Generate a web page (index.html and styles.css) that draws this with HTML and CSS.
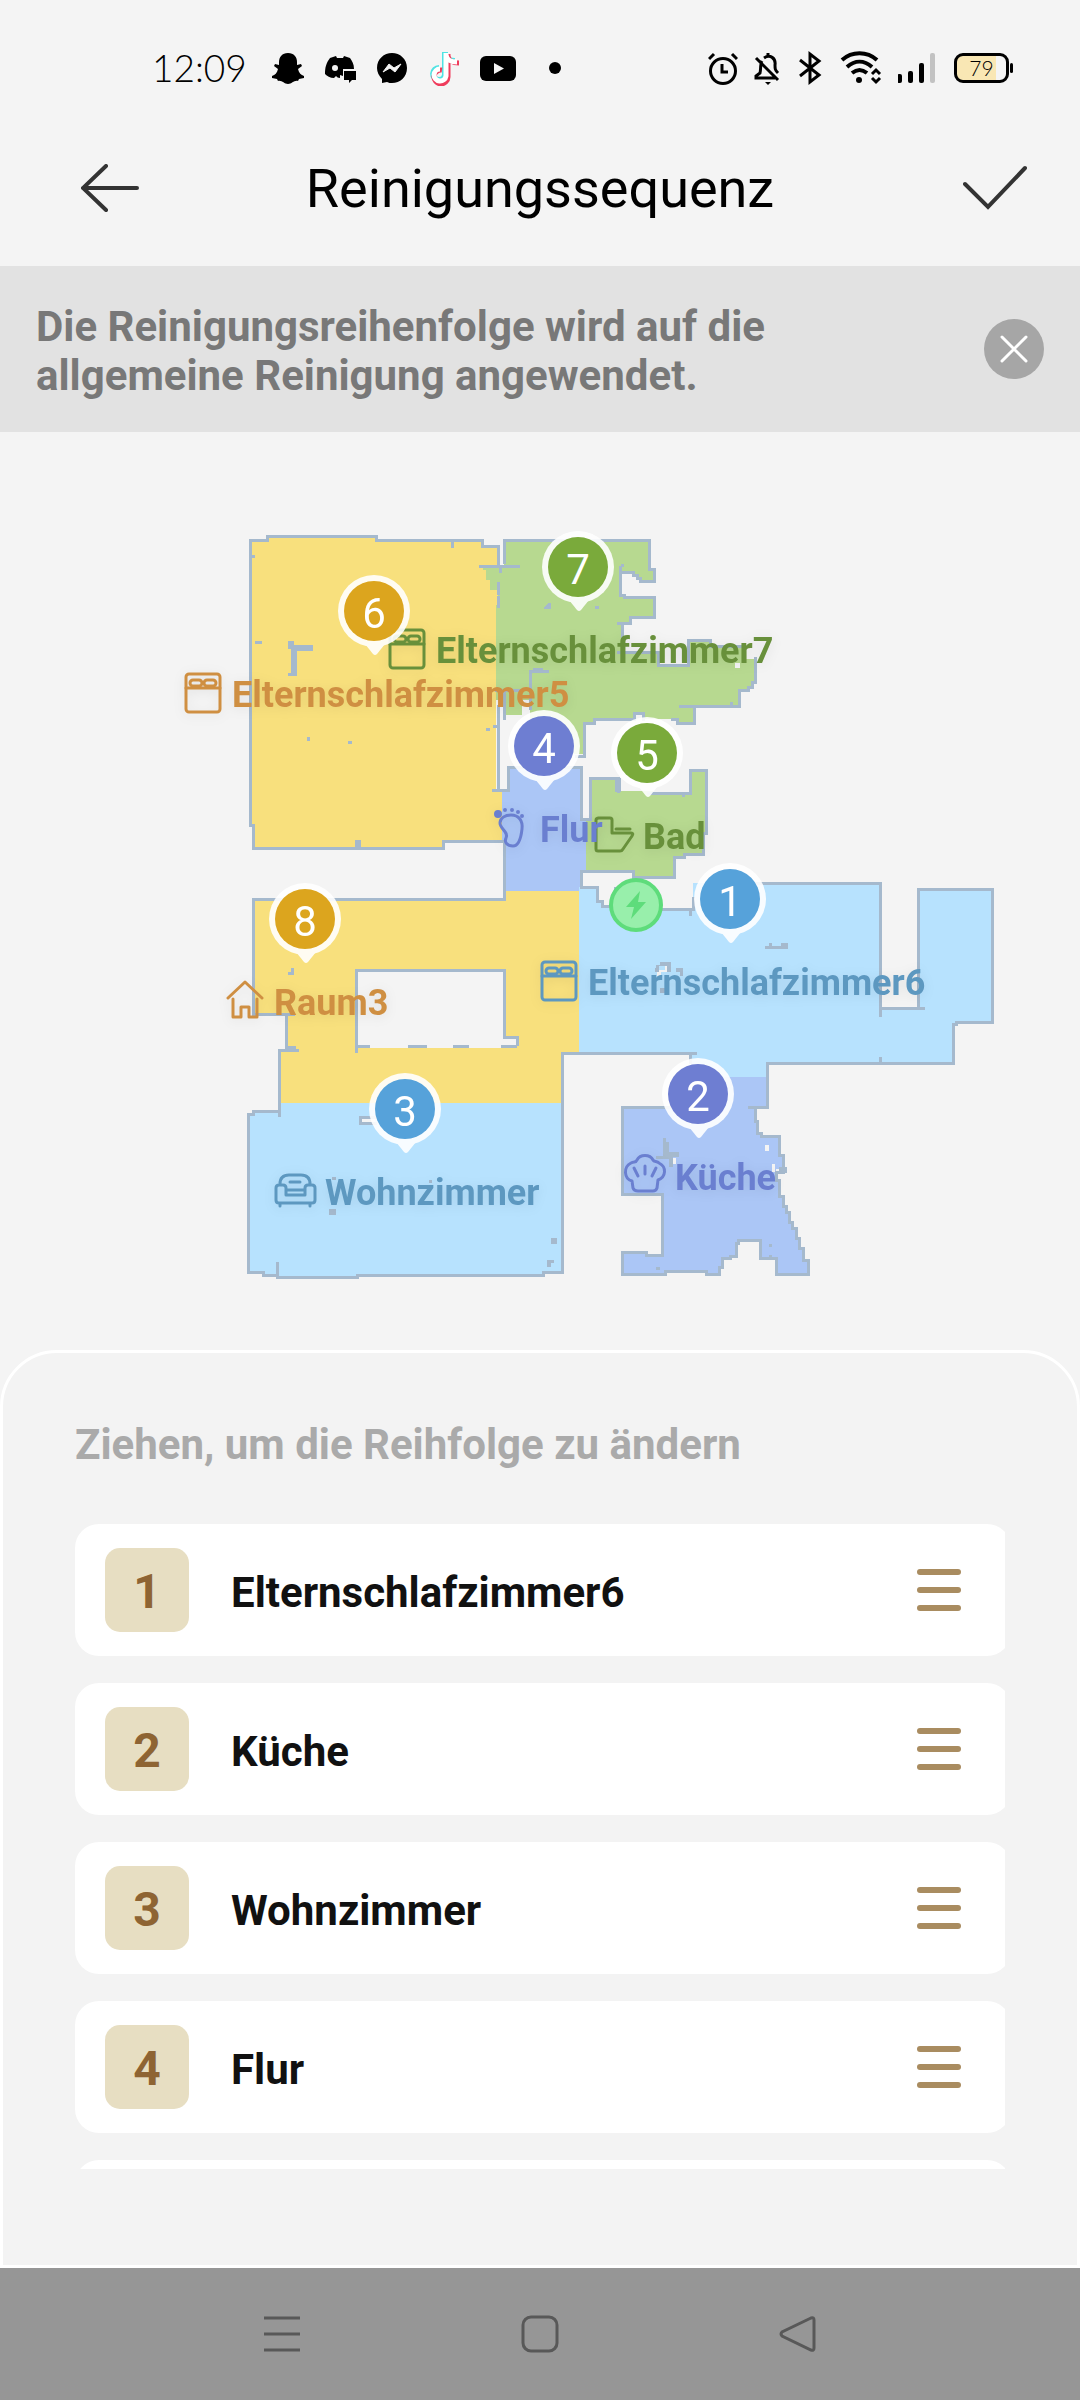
FILE: index.html
```html
<!DOCTYPE html>
<html lang="de">
<head>
    <meta charset="UTF-8">
    <meta name="viewport" content="width=device-width, initial-scale=1.0">
    <title>Reinigungssequenz</title>
    <link rel="stylesheet" href="styles.css">
</head>
<body>

    <div class="status-bar">
        <div class="status-left">
            <span class="clock">12:09</span>
            <!-- Snapchat -->
            <svg width="32" height="36" viewBox="0 0 32 36"><path d="M16 3c6 0 9 4 9 9v3l4-1 1 2-4 3c1 4 3 6 6 7v2l-5 1-1 2c-4-1-6 3-10 3s-6-4-10-3l-1-2-5-1v-2c3-1 5-3 6-7l-4-3 1-2 4 1v-3c0-5 3-9 9-9z"/></svg>
            <!-- Discord -->
            <svg width="32" height="36" viewBox="0 0 32 36"><path d="M6 8l6-2 1 2h6l1-2 6 2c2 3 4 6 4 11H19v7l-3-1v3c-2 0-3-1-4-2l-2 2c-4 0-7-2-9-4 0-6 1-11 5-16z"/><path d="M20 21h12v9h-4l-3 3v-3h-5z"/><circle cx="11" cy="18" r="3" fill="#f4f4f4"/></svg>
            <!-- Messenger -->
            <svg width="32" height="36" viewBox="0 0 32 36"><path d="M16 3C8 3 1 9 1 18c0 4 2 8 5 11v4l5-1c2 1 3 1 5 1 8 0 15-6 15-15S24 3 16 3z"/><path d="M7 22l6-8 5 4 7-4-6 8-5-4z" fill="#f4f4f4" stroke="#f4f4f4"/></svg>
            <!-- TikTok -->
            <svg width="32" height="36" viewBox="0 0 32 36" fill="none" stroke-width="5"><path d="M17 2v23a6 6 0 1 1-6-7M17 4c1 5 4 7 10 7" stroke="#4fe3e3" stroke-width="6"/><path d="M20 4v23a7 7 0 1 1-6-7M20 6c1 5 4 7 11 7" stroke="#ef3c5c"/><path d="M18 3v23a6 6 0 1 1-6-7M18 5c1 5 4 7 11 7" stroke="#fff"/></svg>
            <!-- YouTube -->
            <svg width="36" height="36" viewBox="0 0 36 36"><rect y="6" width="36" height="25" rx="6"/><path d="M14 13l10 5.500-10 5.500z" fill="#f4f4f4"/></svg>
            <svg class="more-dot" width="14" height="36" viewBox="0 0 14 36"><circle cx="7" cy="18" r="6"/></svg>
        </div>
        <div class="status-right">
            <!-- Wecker -->
            <svg width="30" height="36" viewBox="0 0 30 36" fill="none" stroke="#000" stroke-width="3"><circle cx="15" cy="21" r="12.500"/><path d="M14 14v8h6M1 9l5-5M29 9l-5-5"/></svg>
            <!-- Stumm -->
            <svg width="28" height="36" viewBox="0 0 28 36" fill="none" stroke="#000" stroke-width="3"><path d="M8 11c-2 3-1 9-2 12l-4 3v2h19M10 8c6-4 12 0 11 7 0 4 0 5 3 8M14 3v4M2 8l22 22"/><path d="M11 32h6l-3 3z" fill="#000" stroke="none"/></svg>
            <!-- Bluetooth -->
            <svg width="24" height="36" viewBox="0 0 24 36" fill="none" stroke="#000" stroke-width="3"><path d="M2 10l19 15-9 7V4l9 7L2 26"/></svg>
            <!-- WLAN -->
            <svg width="44" height="36" viewBox="0 0 44 36" fill="none" stroke="#000" stroke-width="4"><path d="M4 10c10-9 25-9 35 0M9 17c8-7 17-7 25 0M14 23c5-4 10-4 15 0"/><circle cx="21" cy="30" r="3" fill="#000" stroke="none"/><path d="M34 24l4-4 4 4M34 28l4 4 4-4" stroke-width="3"/></svg>
            <!-- Mobilfunk -->
            <svg width="40" height="36" viewBox="0 0 40 36"><rect x="-1" y="24" width="5" height="9" rx="2"/><rect x="10" y="21" width="5" height="12" rx="2"/><rect x="21" y="13" width="5" height="20" rx="2"/><rect x="32" y="3" width="5" height="30" rx="2" fill="#c2c2c2"/></svg>
            <div class="battery"><span>79</span></div>
        </div>
    </div>

    <header class="header">
        <button class="icon-button back" aria-label="Zurück">
            <svg width="58" height="48" viewBox="0 0 58 48"><path d="M25 2L2 24l23 22M2 24h54"/></svg>
        </button>
        <h1>Reinigungssequenz</h1>
        <button class="icon-button confirm" aria-label="Fertig">
            <svg width="64" height="48" viewBox="0 0 64 48"><path d="M2 20l23 23L62 4"/></svg>
        </button>
    </header>

    <div class="notice">
        <p>Die Reinigungsreihenfolge wird auf die allgemeine Reinigung angewendet.</p>
        <button class="close" aria-label="Schließen">
            <svg width="30" height="30" viewBox="0 0 30 30"><path d="M3 3l24 24M27 3L3 27"/></svg>
        </button>
    </div>

    <svg class="map" viewBox="0 432 1080 918">
        <defs>
            <symbol id="bed" viewBox="0 0 38 42" overflow="visible">
                <rect x="2" y="2" width="34" height="38" rx="3"/>
                <path d="M2 16h34"/>
                <rect x="6" y="8" width="12" height="6" rx="3"/>
                <rect x="20" y="8" width="12" height="6" rx="3"/>
            </symbol>
            <g id="pin">
                <circle r="36"/>
                <path d="M-9 33L-1 43q2 2 4 0L11 33z"/>
            </g>
        </defs>

        <!-- Räume -->
        <g class="rooms">
            <path class="yellow" d="M250 540H267V536H376V540H482V546H498V605H496V790H502V841H443V848H253V825H250Z"/>
            <path class="green" d="M504 540H649V569H654V581H640V578H637V575H633V572H621V595H624V597H654V617H630V623H622V652H658V665H688V640H710V646H742V659H755V682H752V687H748V690H739V706H694V723H677V719H643V713H634V719H594V723H584V754H530V700H522V715H506V700H496V605H498V590H490V580H486V570H483V566H504Z"/>
            <path class="green" d="M590 778H618V791H653V793H690V770H706V833H703V854H684V857H674V877H633V871H586V819H590Z"/>
            <path class="purple" d="M508 767H581V819H586V870H581V891H504V841H502V790H508Z"/>
            <path class="yellow" fill-rule="evenodd" d="M504 891H579V1053H562V1103H280V1050H286V1014H253V899H504ZM356 970H504V1037H517V1048H356Z"/>
            <path class="blue" d="M279 1103H562V1272H543V1275H357V1277H277V1275H263V1272H248V1114H253V1111H279Z"/>
            <path class="blue" d="M579 887H597V901H602V906H610V909H693V883H880V1008H918V889H992V1022H956V1024H953V1063H767V1077H690V1053H579Z"/>
            <path class="purple" d="M690 1077H767V1107H755V1121H757V1133H761V1136H779V1155H783V1169H776V1180H779V1196H783V1206H786V1212H789V1222H792V1228H796V1238H799V1248H803V1260H808V1274H776V1258H760V1240H738V1243H736V1256H730V1258H722V1267H719V1274H706V1271H665V1274H622V1252H646V1255H662V1194H622V1107H690Z"/>
            <path class="free" d="M562 1053H690V1107H562ZM361 1118h14v5h-14zM765 1145h4v6h-4zM672 1158h4v6h-4zM772 1164h3v8h-3zM657 970h8v-4h6v6h-10v4h-4zM735 663h5v5h-5z"/>
        </g>

        <!-- Wände -->
        <g class="walls">
            <path d="M502 841H443V848H253V825H250V540H267V536H376V540H482V546H498V566M480 566H518M500 566V571M498 583V593M498 597V606M498 706V790M493 790H508V767H581V819H590V778H618V791M504 562V540H649V569H654V581H640V578H637V575H633V572H622M620 567V595H624V597H654V617H630V623H618M622 623V652M618 652H658V665H688V640H710V646H742M755 658V682H752V687H748V690H739V706H680M694 706V723H677V719H672M643 719V713H634V719H594V723H584V756H576M496 690H520M504 690V718M530 708V671H547M534 669H541"/>
            <path d="M648 793H690V770H706V833H703V854H684V857H674V877H633V871H581V887H597V901H602V906H614M663 909H693V898M690 909V914M755 883H880V1015M880 1008H923M918 1008V889H992V1022H956V1024H953V1063H767V1107H749M880 1058V1063M615 888V894"/>
            <path d="M504 841V899H253V1014H293M286 1014V1047H294M297 1050H279V1115M279 1111H253V1114H248V1272H263V1275H277V1263M277 1275V1277H357V1275H543V1272H562V1053H695M690 1053V1062M356 1051V970H504V1037H517V1044M356 1046H368M409 1046H425M454 1046H467M502 1046H515M375 1117H360V1123H375"/>
            <path d="M755 1107V1121H757V1133H761V1136H779V1155H783V1172H776V1180H779V1196H783V1206H786V1212H789V1222H792V1228H796V1238H799V1248H803V1260H808V1274H776V1258H760V1240H738V1243H736V1256H730V1258H722V1267H719V1274H706V1271H665V1274H622V1252H646V1255H662V1194H622V1107H690"/>
            <path class="speck" d="M288 641h6v4h19v6h-16v25h-9v-3h3v-24h-3zM255 641h7v3h-7zM251 555h4v3h-4zM451 542h3v6h-3zM307 737h3v4h-3zM348 741h4v3h-4zM486 728h4v3h-4zM493 725h5v3h-5zM355 840h6v8h-6zM545 606l4-3h2v6h-7zM595 606h4v3h-4zM615 778h6v14h-6zM621 564h3v3h-3zM730 702h3v4h-3zM682 793h3v4h-3z"/>
            <path class="speck" d="M291 968h3v7h-6v-3h3zM329 1209h7v6h-7zM332 1177h4v3h-4zM429 1180h3v3h-3zM551 1238h6v6h-6zM547 1260h7v3h-3v4h-4zM765 946h4v-3h3v3h9v-3h7v6h-23zM656 965h4v-3h11v10h-4v-6h-8v6h-4zM676 968h7v8h-3v-4h-4zM660 988h8v5h-8zM663 1138h3v4h3v10h10v5h-6v10h-4v-8h-13v-3h7zM779 1167h8v6h-8zM656 1267h4v3h-4zM769 1244h3v3h-3zM769 1255h3v3h-3z"/>
        </g>

        <!-- Ladestation -->
        <circle class="dock" cx="636" cy="905" r="25"/>
        <path class="dock-bolt" d="M640 891l-14 16h8l-3 12 15-17h-8z"/>

        <!-- Raumnamen -->
        <g class="label text-orange">
            <use href="#bed" x="184" y="672" width="38" height="42"/>
            <text x="232" y="707">Elternschlafzimmer5</text>
            <path d="M228 998l17-16 17 16M233 999v18h8v-10h8v10h8v-18"/>
            <text x="274" y="1015">Raum3</text>
        </g>
        <g class="label text-green">
            <use href="#bed" x="388" y="628" width="38" height="42"/>
            <text x="436" y="663">Elternschlafzimmer7</text>
            <path d="M598 818h12q2 0 2 2v13h19q3 0 1 3l-9 13q-1 2-3 2h-22q-2 0-2-2v-29q0-2 3-2zM616 829h14"/>
            <text x="643" y="849">Bad</text>
        </g>
        <g class="label text-blue">
            <use href="#bed" x="540" y="960" width="38" height="42"/>
            <text x="588" y="995">Elternschlafzimmer6</text>
            <path d="M280 1184q0-9 9-9h12q9 0 9 9M279 1203q-3 0-3-3v-12q0-3 3-3h4q3 0 3 3v7h19v-7q0-3 3-3h4q3 0 3 3v12q0 3-3 3zM286 1190h19M290 1182h10M280 1203v3M310 1203v3"/>
            <text x="325" y="1205">Wohnzimmer</text>
        </g>
        <g class="label text-purple">
            <path d="M500 823c0-5 5-8 11-8 8 0 12 6 11 14-1 9-3 17-9 17-6 0-9-4-7-8 3-6-6-9-6-15z"/>
            <path class="toes" d="M494 814a4 4 0 1 0 8 0a4 4 0 1 0-8 0zM503 810a2 2 0 1 0 4 0a2 2 0 1 0-4 0zM510 810a2 2 0 1 0 4 0a2 2 0 1 0-4 0zM516 812a2 2 0 1 0 4 0a2 2 0 1 0-4 0zM520 816a2 2 0 1 0 4 0a2 2 0 1 0-4 0z"/>
            <text x="540" y="842">Flur</text>
            <path d="M632 1181c-8-2-9-14-1-18 3-2 5 0 6-3 3-6 13-6 16 0 1 2 4 1 6 3 8 4 7 14-1 17l-1 8q-1 3-4 3h-15q-4 0-5-3zM634 1168l4 8M645 1166v8M656 1168l-4 8"/>
            <text x="675" y="1190">Küche</text>
        </g>

        <!-- Reihenfolge -->
        <g class="pin yellow-pin" transform="translate(374 611)"><use href="#pin"/><circle class="dot" r="30"/><text y="17">6</text></g>
        <g class="pin green-pin" transform="translate(578 567)"><use href="#pin"/><circle class="dot" r="30"/><text y="17">7</text></g>
        <g class="pin purple-pin" transform="translate(544 746)"><use href="#pin"/><circle class="dot" r="30"/><text y="17">4</text></g>
        <g class="pin green-pin" transform="translate(647 753)"><use href="#pin"/><circle class="dot" r="30"/><text y="17">5</text></g>
        <g class="pin yellow-pin" transform="translate(305 919)"><use href="#pin"/><circle class="dot" r="30"/><text y="17">8</text></g>
        <g class="pin blue-pin" transform="translate(730 899)"><use href="#pin"/><circle class="dot" r="30"/><text y="17">1</text></g>
        <g class="pin purple-pin" transform="translate(698 1094)"><use href="#pin"/><circle class="dot" r="30"/><text y="17">2</text></g>
        <g class="pin blue-pin" transform="translate(405 1109)"><use href="#pin"/><circle class="dot" r="30"/><text y="17">3</text></g>
    </svg>

    <section class="sheet">
        <h2>Ziehen, um die Reihfolge zu ändern</h2>
        <ol class="room-list">
            <li>
                <span class="number">1</span>
                <span class="name">Elternschlafzimmer6</span>
                <button class="handle" aria-label="Verschieben"><i></i><i></i><i></i></button>
            </li>
            <li>
                <span class="number">2</span>
                <span class="name">Küche</span>
                <button class="handle" aria-label="Verschieben"><i></i><i></i><i></i></button>
            </li>
            <li>
                <span class="number">3</span>
                <span class="name">Wohnzimmer</span>
                <button class="handle" aria-label="Verschieben"><i></i><i></i><i></i></button>
            </li>
            <li>
                <span class="number">4</span>
                <span class="name">Flur</span>
                <button class="handle" aria-label="Verschieben"><i></i><i></i><i></i></button>
            </li>
            <li></li>
        </ol>
    </section>

    <nav class="nav-bar">
        <button aria-label="Letzte Apps"><svg width="38" height="38" viewBox="0 0 38 38"><path d="M1 3h36M1 19h36M1 35h36"/></svg></button>
        <button aria-label="Startseite"><svg width="38" height="38" viewBox="0 0 38 38"><rect x="2" y="2" width="34" height="34" rx="8"/></svg></button>
        <button aria-label="Zurück"><svg width="38" height="38" viewBox="0 0 38 38"><path d="M32 3L3 17q-2 2 0 4l29 14q3 1 3-2V5q0-3-3-2z"/></svg></button>
    </nav>

</body>
</html>
```

FILE: styles.css
```css
* {
    box-sizing: border-box;
}

body {
    font-family: Roboto, "Liberation Sans", sans-serif;
    background: #f4f4f4;
    color: #000;
    margin: 0;
    min-height: 100vh;
    display: flex;
    flex-direction: column;
}

button {
    background: none;
    border: none;
    padding: 0;
    cursor: pointer;
}

svg {
    display: block;
}

/* Statusleiste */
.status-bar {
    display: flex;
    justify-content: space-between;
    align-items: center;
    height: 136px;
    padding: 0 66px 0 152px;
}

.status-left, .status-right {
    display: flex;
    align-items: center;
}

.status-left {
    gap: 20px;
}

.status-right {
    gap: 16px;
}

.clock {
    font-family: Lato, sans-serif;
    font-size: 37px;
    font-weight: 300;
    line-height: 38px;
    min-width: 100px;
}

.more-dot {
    margin-left: 12px;
}

.battery {
    width: 55px;
    height: 30px;
    border: 3px solid #000;
    border-radius: 9px;
    background: linear-gradient(to right, #f9e7b4 80%, #f4f4f4 80%);
    font-family: Lato, sans-serif;
    font-size: 21px;
    font-weight: 300;
    line-height: 24px;
    text-align: center;
    margin-right: 5px;
    position: relative;
}

.battery::after {
    content: "";
    position: absolute;
    right: -7px;
    top: 7px;
    width: 3px;
    height: 10px;
    border-radius: 2px;
    background: #000;
}

/* Kopfzeile */
.header {
    display: grid;
    grid-template-columns: 1fr auto 1fr;
    align-items: center;
    height: 130px;
    padding: 0 53px 26px;
}

.header h1 {
    font-size: 54px;
    font-weight: 400;
    line-height: 64px;
    margin: 0;
    padding-top: 2px;
}

.icon-button path {
    fill: none;
    stroke: #333;
    stroke-width: 4;
    stroke-linecap: round;
}

.back {
    justify-self: start;
    margin-left: 28px;
}

.confirm {
    justify-self: end;
}

/* Hinweis */
.notice {
    display: flex;
    justify-content: space-between;
    align-items: center;
    min-height: 166px;
    padding: 0 36px;
    background: #e2e2e2;
}

.notice p {
    max-width: 800px;
    margin: 0;
    padding-top: 4px;
    color: #787878;
    font-size: 42px;
    font-weight: 700;
    line-height: 49px;
}

.close {
    width: 60px;
    height: 60px;
    border-radius: 50%;
    background: #a6a6a6;
    display: grid;
    place-items: center;
}

.close path {
    stroke: #fff;
    stroke-width: 3;
    stroke-linecap: round;
}

/* Karte */
.map {
    width: 100%;
    height: auto;
}

.yellow { fill: #f8e07d; }
.green { fill: #b7d990; }
.blue { fill: #b7e2fe; }
.purple { fill: #abc6f6; }
.free { fill: #f4f4f4; }

.rooms, .walls {
    shape-rendering: crispEdges;
}

.walls path {
    fill: none;
    stroke: #a5b9cd;
    stroke-width: 3;
    stroke-linecap: square;
}

.walls .speck {
    fill: #a5b9cd;
    stroke: none;
}

.dock {
    fill: #98efab;
    stroke: #5edc7b;
    stroke-width: 4;
}

.dock-bolt {
    fill: #5edc7b;
}

.label {
    fill: none;
    stroke-width: 3;
    stroke-linejoin: round;
    stroke-linecap: round;
    filter: drop-shadow(0 2px 6px rgba(0, 0, 0, 0.08));
}

.label text {
    stroke: none;
    font-size: 36px;
    font-weight: 700;
}

.text-orange { stroke: #cf8f42; }
.text-orange text { fill: #cf8f42; }
.text-green { stroke: #68903b; }
.text-green text { fill: #68903b; }
.text-blue { stroke: #5d98c0; }
.text-blue text { fill: #5d98c0; }
.text-purple { stroke: #6a7fd0; }
.text-purple text, .toes { fill: #6a7fd0; }

.toes {
    stroke: none;
}

.pin use {
    fill: #fff;
    opacity: 0.9;
}

.pin text {
    fill: #fff;
    font-size: 42px;
    text-anchor: middle;
}

.yellow-pin .dot { fill: #dca51e; }
.green-pin .dot { fill: #7aaa3b; }
.blue-pin .dot { fill: #56a2da; }
.purple-pin .dot { fill: #6e7ed2; }

/* Liste */
.sheet {
    flex: 1;
    padding: 67px 72px 96px;
    border: 3px solid #fff;
    border-radius: 57px 57px 0 0;
    background: #f3f3f3;
}

.sheet h2 {
    margin: 0 0 55px;
    color: #aaa;
    font-size: 42px;
    font-weight: 700;
    line-height: 49px;
}

.room-list {
    list-style: none;
    margin: 0;
    padding: 0;
    height: 645px;
    overflow: hidden;
}

.room-list li {
    display: flex;
    align-items: center;
    height: 132px;
    margin: 0 -6px 27px 0;
    padding: 0 50px 0 30px;
    border-radius: 24px;
    background: #fff;
}

.number {
    width: 84px;
    height: 84px;
    border-radius: 15px;
    background: #e7dec2;
    color: #8e6433;
    font-size: 48px;
    font-weight: 700;
    line-height: 88px;
    text-align: center;
}

.name {
    flex: 1;
    margin-left: 42px;
    padding-top: 4px;
    color: #111;
    font-size: 42px;
    font-weight: 700;
    line-height: 49px;
}

.handle {
    display: flex;
    flex-direction: column;
    gap: 12px;
}

.handle i {
    width: 44px;
    height: 6px;
    border-radius: 3px;
    background: #a98c60;
}

/* Navigation */
.nav-bar {
    display: flex;
    justify-content: space-between;
    align-items: center;
    height: 132px;
    padding: 0 24%;
    background: #969696;
}

.nav-bar button {
    width: 46px;
    display: grid;
    place-items: center;
}

.nav-bar svg {
    fill: none;
    stroke: #585858;
    stroke-width: 3;
}
```
